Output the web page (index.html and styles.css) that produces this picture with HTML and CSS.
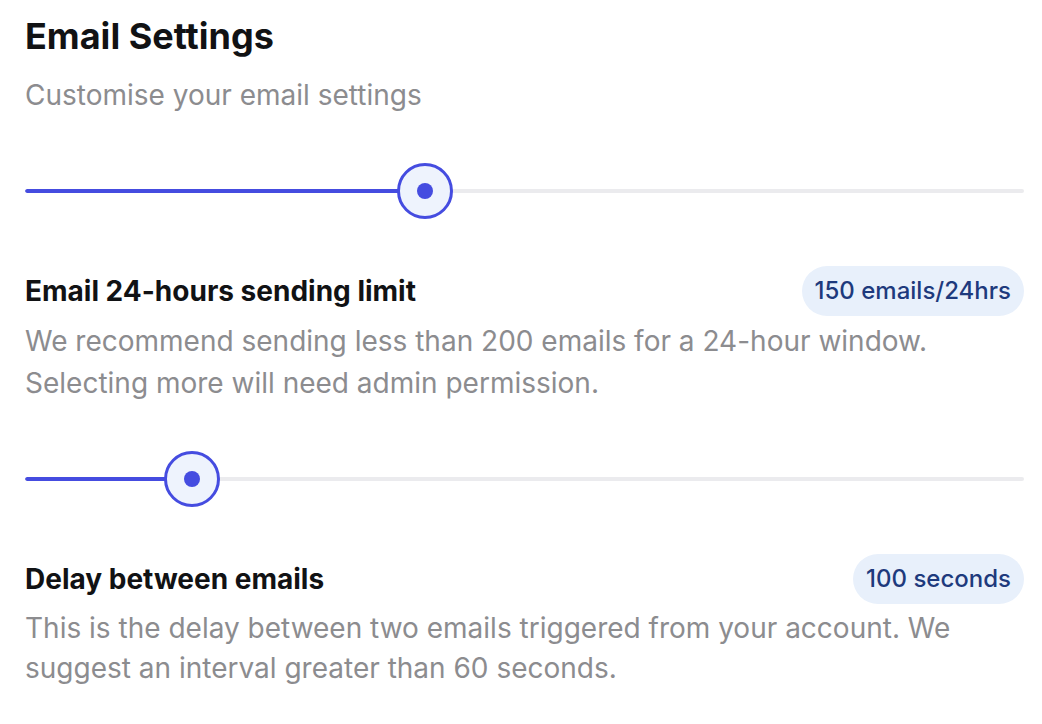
FILE: index.html
```html
<!DOCTYPE html>
<html lang="en">
<head>
<meta charset="utf-8">
<title>Email Settings</title>
<link rel="stylesheet" href="styles.css">
</head>
<body>
<main class="settings">
  <header class="settings-head">
    <h1 class="title">Email Settings</h1>
    <p class="subtitle">Customise your email settings</p>
  </header>

  <div class="slider" role="slider" aria-valuenow="40">
    <div class="track"><div class="fill" style="width: 40%"></div></div>
    <div class="thumb" style="left: 40%"><span class="dot"></span></div>
  </div>

  <section class="field">
    <div class="field-head">
      <h2 class="label">Email 24-hours sending limit</h2>
      <span class="badge">150 emails/24hrs</span>
    </div>
    <p class="desc">We recommend sending less than 200 emails for a 24-hour window.<br>Selecting more will need admin permission.</p>
  </section>

  <div class="slider" role="slider" aria-valuenow="16.7">
    <div class="track"><div class="fill" style="width: 16.7%"></div></div>
    <div class="thumb" style="left: 16.7%"><span class="dot"></span></div>
  </div>

  <section class="field">
    <div class="field-head">
      <h2 class="label">Delay between emails</h2>
      <span class="badge">100 seconds</span>
    </div>
    <p class="desc desc-tight">This is the delay between two emails triggered from your account. We<br>suggest an interval greater than 60 seconds.</p>
  </section>
</main>
</body>
</html>
```

FILE: styles.css
```css
* { box-sizing: border-box; }

html, body {
  margin: 0;
  padding: 0;
  background: #ffffff;
}

body {
  font-family: Inter, "Noto Sans", "Liberation Sans", sans-serif;
  color: #111214;
}

.settings {
  width: 999px;
  margin-left: 25px;
  padding-top: 16px;
  display: flex;
  flex-direction: column;
  gap: 47px;
}

.settings-head {
  display: flex;
  flex-direction: column;
  gap: 21px;
  margin-bottom: 3px;
}

.title {
  margin: 0;
  font-size: 36px;
  line-height: 40px;
  font-weight: 700;
  color: #111214;
}

.subtitle {
  margin: 0;
  font-size: 28px;
  line-height: 36px;
  font-weight: 400;
  color: #8c8c8f;
}

.slider {
  position: relative;
  height: 56px;
  display: flex;
  align-items: center;
}

.track {
  width: 100%;
  height: 4px;
  border-radius: 2px;
  background: #ebebee;
  overflow: hidden;
}

.fill {
  height: 100%;
  border-radius: 2px;
  background: #454ce0;
}

.thumb {
  position: absolute;
  top: 0;
  width: 56px;
  height: 56px;
  margin-left: -28px;
  border-radius: 50%;
  border: 3px solid #454ce0;
  background: #eef3fd;
  display: flex;
  align-items: center;
  justify-content: center;
}

.dot {
  width: 16px;
  height: 16px;
  border-radius: 50%;
  background: #454ce0;
}

.field {
  display: flex;
  flex-direction: column;
  gap: 4px;
}

.field-head {
  display: flex;
  align-items: center;
  justify-content: space-between;
}

.label {
  margin: 0;
  font-size: 28px;
  line-height: 32px;
  font-weight: 700;
  color: #111214;
}

.badge {
  height: 50px;
  padding: 0 13px;
  border-radius: 25px;
  background: #e8f0fb;
  color: #1e3a7d;
  font-size: 24px;
  line-height: 50px;
  font-weight: 500;
}

.desc {
  margin: 0;
  font-size: 28px;
  line-height: 42px;
  color: #8c8c8f;
}

.desc-tight {
  line-height: 40px;
}
```
